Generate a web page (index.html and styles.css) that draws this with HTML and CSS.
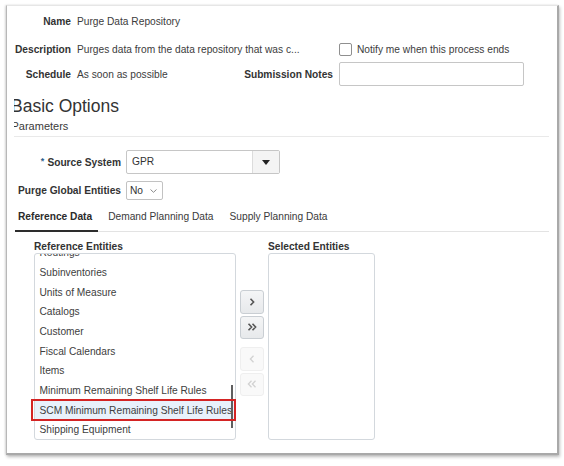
FILE: index.html
```html
<!DOCTYPE html>
<html>
<head>
<meta charset="utf-8">
<link rel="stylesheet" href="styles.css">
</head>
<body>
<div class="card">
  <div class="summary">
    <div class="lbl">Name</div>
    <div class="val span3">Purge Data Repository</div>

    <div class="lbl">Description</div>
    <div class="val span2">Purges data from the data repository that was c...</div>
    <label class="check"><span class="box"></span><span>Notify me when this process ends</span></label>

    <div class="lbl">Schedule</div>
    <div class="val">As soon as possible</div>
    <div class="lbl">Submission Notes</div>
    <div class="textbox"></div>
  </div>

  <div class="section">
    <h2 class="heading">Basic Options</h2>
    <div class="sub">Parameters</div>
  </div>

  <div class="params">
    <div class="lbl"><span class="req">*</span>Source System</div>
    <div class="select">
      <span class="select-text">GPR</span>
      <span class="select-btn"><svg width="8" height="5" viewBox="0 0 8 5"><path d="M0 0H8L4 5Z" fill="#222"/></svg></span>
    </div>
    <div class="lbl">Purge Global Entities</div>
    <div class="mini-select">
      <span>No</span>
      <svg width="7" height="4" viewBox="0 0 7 4"><path d="M0.5 0.5L3.5 3.3L6.5 0.5" fill="none" stroke="#8a8a8a" stroke-width="1"/></svg>
    </div>
  </div>

  <div class="tabs">
    <div class="tab active">Reference Data</div>
    <div class="tab">Demand Planning Data</div>
    <div class="tab">Supply Planning Data</div>
  </div>

  <div class="shuttle">
    <div class="pane pane-left">
      <div class="pane-label">Reference Entities</div>
      <div class="listbox">
        <ul class="items">
          <li>Routings</li>
          <li>Subinventories</li>
          <li>Units of Measure</li>
          <li>Catalogs</li>
          <li>Customer</li>
          <li>Fiscal Calendars</li>
          <li>Items</li>
          <li>Minimum Remaining Shelf Life Rules</li>
          <li class="selected">SCM Minimum Remaining Shelf Life Rules</li>
          <li>Shipping Equipment</li>
        </ul>
        <div class="scrollbar"></div>
      </div>
      <div class="mark"></div>
    </div>

    <div class="moves">
      <div class="mv">
        <svg width="10" height="10" viewBox="0 0 10 10"><path d="M3.5 1.8L6.6 5L3.5 8.2" fill="none" stroke="#555" stroke-width="1.6"/></svg>
      </div>
      <div class="mv">
        <svg width="12" height="10" viewBox="0 0 12 10"><path d="M2.5 1.8L5.6 5L2.5 8.2M6.5 1.8L9.6 5L6.5 8.2" fill="none" stroke="#555" stroke-width="1.6"/></svg>
      </div>
      <div class="mv off gap">
        <svg width="10" height="10" viewBox="0 0 10 10"><path d="M6.5 1.8L3.4 5L6.5 8.2" fill="none" stroke="#d2d2d2" stroke-width="1.3"/></svg>
      </div>
      <div class="mv off">
        <svg width="12" height="10" viewBox="0 0 12 10"><path d="M5.5 1.8L2.4 5L5.5 8.2M9.5 1.8L6.4 5L9.5 8.2" fill="none" stroke="#d2d2d2" stroke-width="1.3"/></svg>
      </div>
    </div>

    <div class="pane pane-right">
      <div class="pane-label">Selected Entities</div>
      <div class="listbox"></div>
    </div>
  </div>
</div>
</body>
</html>
```

FILE: styles.css
```css
* { box-sizing: border-box; }

html, body {
  margin: 0;
  padding: 0;
  background: #ffffff;
}

body {
  font-family: "Liberation Sans", Arial, sans-serif;
  font-size: 10.2px;
  color: #3a3a3a;
  width: 564px;
  height: 466px;
  overflow: hidden;
}

.card {
  margin: 5px 0 0 6px;
  width: 553px;
  height: 450px;
  border: 1px solid #b8b8b8;
  border-top-color: #e6e6e6;
  border-right: 2px solid #a9a9a9;
  border-bottom: 2px solid #a9a9a9;
  box-shadow: 1px 2px 3px rgba(0, 0, 0, 0.25), -1px 0 2px rgba(0, 0, 0, 0.12);
  background: #fff;
}

.lbl {
  font-weight: bold;
  color: #333;
  text-align: right;
  align-self: center;
  white-space: nowrap;
}

.val {
  align-self: center;
  white-space: nowrap;
  color: #3c3c3c;
}

/* top summary */
.summary {
  display: grid;
  grid-template-columns: 56px 160px 90px 185px;
  grid-template-rows: 30px 20px 24px;
  column-gap: 6px;
  row-gap: 3px;
  margin-left: 8px;
}

.span3 { grid-column: 2 / span 3; }
.span2 { grid-column: 2 / span 2; }

.check {
  display: flex;
  align-items: center;
  gap: 5px;
  white-space: nowrap;
  color: #3c3c3c;
}

.box {
  width: 13px;
  height: 13px;
  border: 1px solid #8f8f8f;
  border-radius: 2px;
  background: #fff;
  flex: none;
}

.textbox {
  height: 24px;
  border: 1px solid #c6c6c6;
  border-radius: 2px;
  background: #fff;
}

/* basic options */
.section {
  margin: 10px 8px 0 7px;
  overflow: hidden;
  border-bottom: 1px solid #e9e9e9;
  padding-bottom: 3px;
}

.heading {
  margin: 0 0 0 -3px;
  font-size: 17.5px;
  line-height: 20px;
  font-weight: normal;
  color: #333;
  white-space: nowrap;
}

.sub {
  margin: 4px 0 0 -2.5px;
  font-size: 11px;
  line-height: 13px;
  color: #3a3a3a;
}

/* parameters */
.params {
  display: grid;
  grid-template-columns: 106px auto;
  grid-template-rows: 24px 19px;
  column-gap: 5px;
  row-gap: 7px;
  margin: 13px 0 0 8px;
  justify-items: start;
}

.params .lbl { justify-self: stretch; }

.req {
  color: #2f5e8e;
  font-size: 9px;
  vertical-align: 2px;
  margin-right: 3px;
}

.select {
  width: 154px;
  height: 24px;
  display: flex;
  border: 1px solid #c6c6c6;
  border-radius: 2px;
  background: #fff;
}

.select-text {
  flex: 1;
  padding-left: 5px;
  line-height: 22px;
  color: #333;
}

.select-btn {
  width: 27px;
  border-left: 1px solid #dcdcdc;
  background: #f4f4f4;
  display: flex;
  align-items: center;
  justify-content: center;
}

.mini-select {
  width: 37px;
  height: 19px;
  border: 1px solid #c2c2c2;
  border-radius: 2px;
  display: flex;
  align-items: center;
  padding-left: 3px;
  gap: 7px;
  color: #333;
}

/* tabs */
.tabs {
  display: flex;
  margin: 5px 8px 0 8px;
  border-bottom: 1px solid #e3e3e3;
}

.tab {
  padding: 5px 6px 7px 3px;
  line-height: 13px;
  margin-right: 7px;
  color: #3a3a3a;
  border-bottom: 2px solid transparent;
  margin-bottom: -1px;
  white-space: nowrap;
}

.tab.active {
  font-weight: bold;
  color: #2b2b2b;
  border-bottom-color: #2d2d2d;
}

/* shuttle */
.shuttle {
  display: flex;
  gap: 4px;
  margin: 9px 0 0 27px;
}

.pane { position: relative; }
.pane-left { width: 202px; }
.pane-right { width: 107px; }

.pane-label {
  font-weight: bold;
  color: #333;
  line-height: 12px;
  white-space: nowrap;
  position: relative;
  z-index: 1;
}

.listbox {
  height: 187px;
  border: 1px solid #d3d8dd;
  border-radius: 3px;
  overflow: hidden;
  position: relative;
  background: #fff;
}

.items {
  list-style: none;
  margin: -10.8px 0 0 0;
  padding: 0;
}

.items li {
  height: 19.7px;
  line-height: 19.7px;
  padding-left: 4.5px;
  white-space: nowrap;
  color: #404040;
}

.items li.selected {
  background: #e8f1fb;
}

.scrollbar {
  position: absolute;
  left: 196px;
  top: 131px;
  width: 2px;
  height: 43px;
  background: #5f5f5f;
}

.mark {
  position: absolute;
  left: -3px;
  top: 158px;
  width: 205px;
  height: 22px;
  border: 2px solid #d42424;
}

.moves {
  width: 24px;
  padding-top: 49px;
  display: flex;
  flex-direction: column;
  gap: 2px;
}

.mv {
  height: 23.5px;
  border: 1px solid #c9ced3;
  border-radius: 3px;
  background: linear-gradient(#f4f5f6, #e7e9eb);
  display: flex;
  align-items: center;
  justify-content: center;
}

.mv.off {
  border-color: #efefef;
  background: #f9f9f9;
}

.mv.gap { margin-top: 6px; }
```
